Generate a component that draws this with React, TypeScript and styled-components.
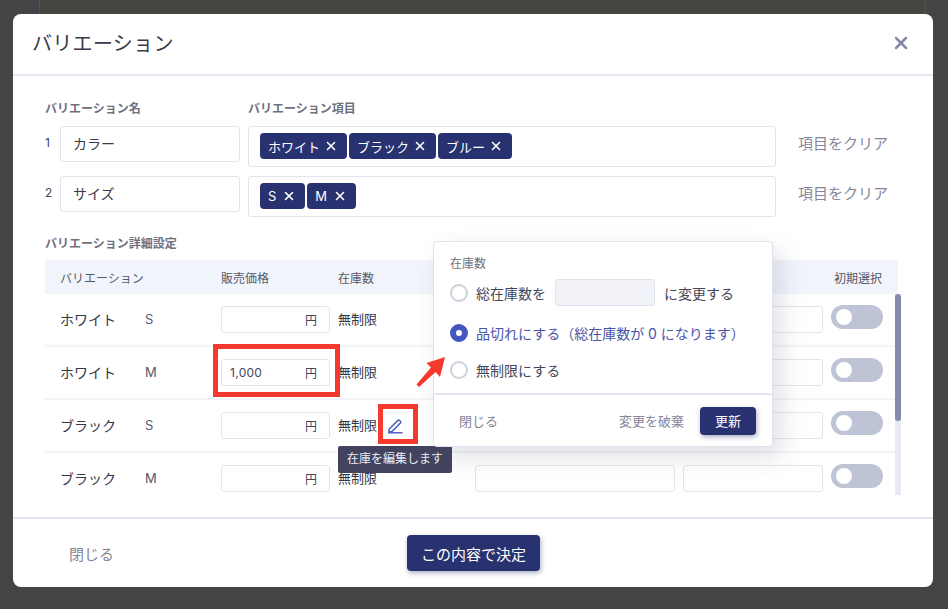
import React from 'react';
import styled, { createGlobalStyle } from 'styled-components';
import { X } from 'lucide-react';

const GlobalStyle = createGlobalStyle`
  html, body {
    margin: 0;
    padding: 0;
    background: #444446;
  }
  * {
    box-sizing: border-box;
  }
`;

const Page = styled.div`
  position: relative;
  width: 948px;
  height: 609px;
  padding: 14px 15px 22px 13px;
  overflow: hidden;
  background: #444446;
  font-family: Inter, 'Noto Sans CJK JP', sans-serif;
  font-size: 14px;
  color: #33354a;
`;

const BackCard = styled.div`
  position: absolute;
  top: 0;
  left: 39px;
  width: 887px;
  height: 14px;
  background: #47453f;
  border-left: 1px solid #5c5134;
  border-right: 1px solid #5c5134;
`;

const Modal = styled.div`
  position: relative;
  display: flex;
  flex-direction: column;
  height: 100%;
  background: #fff;
  border-radius: 8px;
`;

const ModalHeader = styled.header`
  display: flex;
  align-items: center;
  justify-content: space-between;
  height: 62px;
  padding: 0 22px 3px 19px;
  border-bottom: 2px solid #e4e7f0;
`;

const Title = styled.h1`
  margin: 0;
  font-size: 20px;
  font-weight: 400;
  letter-spacing: 0.3px;
  color: #3a3b48;
`;

const CloseIcon = styled(X)`
  color: #8589ac;
`;

const ModalBody = styled.div`
  flex: 1;
  padding: 24px 35px 0 32px;
`;

const NameGrid = styled.div`
  display: grid;
  grid-template-columns: 15px 180px 536px 1fr;
  align-items: start;
`;

const SectionLabel = styled.div`
  font-size: 12px;
  line-height: 18px;
  font-weight: 700;
  color: #6e7080;
`;

const NameHead = styled(SectionLabel)`
  grid-column: 1 / span 2;
  margin-bottom: 8px;
`;

const ItemsHead = styled(SectionLabel)`
  grid-column: 3 / span 2;
  margin-left: 8px;
  margin-bottom: 8px;
`;

const RowNumber = styled.div`
  font-size: 12px;
  line-height: 34px;
  color: #44465a;
`;

const NameField = styled.div`
  height: 36px;
  padding: 0 12px;
  line-height: 33px;
  font-size: 14px;
  color: #3a3b48;
  border: 1px solid #e1e4ee;
  border-radius: 3px;
`;

const TagBox = styled.div`
  display: flex;
  gap: 2px;
  height: 41px;
  margin: 0 0 9px 8px;
  padding: 6px 11px;
  border: 1px solid #e1e4ee;
  border-radius: 3px;
`;

const Tag = styled.span<{ $latin: boolean }>`
  display: inline-flex;
  align-items: center;
  gap: ${(p) => (p.$latin ? 6 : 4)}px;
  height: 26px;
  padding: 0 9px 0 8px;
  font-size: 13px;
  color: #fff;
  background: #283271;
  border-radius: 4px;
`;

const TagClose = styled(X)`
  flex: none;
  color: #fff;
`;

const ClearLink = styled.div`
  margin-left: 22px;
  font-size: 15px;
  line-height: 36px;
  white-space: nowrap;
  color: #85869a;
`;

const DetailLabel = styled(SectionLabel)`
  margin-top: 9px;
  margin-bottom: 7px;
`;

const Table = styled.div`
  position: relative;
  width: 853px;
`;

const TableHead = styled.div`
  display: grid;
  grid-template-columns: 161px 117px 1fr 64px;
  align-items: center;
  height: 34px;
  padding-left: 15px;
  font-size: 12px;
  color: #55576a;
  background: #f1f4fb;
`;

const TableRows = styled.div`
  height: 201px;
  overflow: hidden;
`;

const Row = styled.div`
  display: grid;
  grid-template-columns: 85px 76px 117px 137px 200px 8px 140px 8px 52px;
  align-items: center;
  height: 53px;
  padding-left: 15px;
  padding-bottom: 1px;
  border-bottom: 2px solid #f3f4f8;
`;

const ColorName = styled.div`
  font-size: 14px;
  color: #33354a;
`;

const SizeName = styled.div`
  font-size: 13px;
  color: #55576a;
`;

const PriceField = styled.div`
  display: flex;
  align-items: center;
  justify-content: space-between;
  width: 109px;
  height: 27px;
  padding: 0 12px 0 8px;
  font-size: 12px;
  color: #44465a;
  border: 1px solid #e1e4ee;
  border-radius: 3px;
`;

const Amount = styled.span`
  letter-spacing: 0.3px;
`;

const StockText = styled.div`
  margin-top: -1px;
  font-size: 13px;
  color: #33354a;
`;

const BlankField = styled.div<{ $col: number }>`
  grid-column: ${(p) => p.$col};
  height: 27px;
  border: 1px solid #e1e4ee;
  border-radius: 3px;
`;

const Toggle = styled.div`
  grid-column: 9;
  display: flex;
  align-items: center;
  width: 52px;
  height: 24px;
  margin-top: -5px;
  padding-left: 5px;
  background: #bfc3d6;
  border-radius: 12px;
`;

const ToggleKnob = styled.span`
  width: 16px;
  height: 16px;
  background: #fff;
  border-radius: 50%;
`;

const ScrollTrack = styled.div`
  position: absolute;
  top: 34px;
  right: -3px;
  width: 6px;
  height: 201px;
  background: #e8eaf1;
`;

const ScrollThumb = styled.div`
  height: 127px;
  background: #8589ac;
  border-radius: 3px;
`;

const ModalFooter = styled.footer`
  display: grid;
  grid-template-columns: 338px auto;
  align-items: center;
  height: 70px;
  padding-left: 56px;
  border-top: 2px solid #e4e7f0;
`;

const FooterClose = styled.div`
  font-size: 15px;
  color: #85869a;
`;

const PrimaryButton = styled.button<{ $w: number; $h: number; $size: number }>`
  justify-self: start;
  width: ${(p) => p.$w}px;
  height: ${(p) => p.$h}px;
  padding: 0;
  font-family: inherit;
  font-size: ${(p) => p.$size}px;
  color: #fff;
  background: #283271;
  border: none;
  border-radius: 4px;
  box-shadow: 1px 2px 5px rgba(40, 50, 113, 0.4);
`;

const Popover = styled.div`
  position: absolute;
  top: 241px;
  left: 433px;
  width: 340px;
  height: 206px;
  background: #fff;
  border: 1px solid #dfe2ec;
  border-radius: 4px;
  box-shadow: 8px 10px 24px rgba(60, 66, 100, 0.16);
`;

const PopoverBody = styled.div`
  height: 153px;
  padding: 13px 16px 0;
  border-bottom: 2px solid #e4e7f0;
`;

const PopoverLabel = styled.div`
  margin-bottom: 6px;
  font-size: 12px;
  font-weight: 400;
  line-height: 18px;
  color: #6e7080;
`;

const RadioRow = styled.label<{ $h: number; $active?: boolean }>`
  display: flex;
  align-items: center;
  gap: 8px;
  height: ${(p) => p.$h}px;
  font-size: 14px;
  white-space: nowrap;
  color: ${(p) => (p.$active ? '#4a55a8' : '#44465a')};
`;

const RadioMark = styled.span<{ $on?: boolean }>`
  flex: none;
  width: 18px;
  height: 18px;
  border-radius: 50%;
  background: #fff;
  border: ${(p) => (p.$on ? '6px solid #4255c0' : '2px solid #cdd1dc')};
`;

const StockInput = styled.span`
  width: 100px;
  height: 27px;
  margin: 0 1px;
  background: #f1f3f8;
  border: 1px solid #dfe2ec;
  border-radius: 3px;
`;

const PopoverFooter = styled.div`
  display: flex;
  align-items: center;
  height: 51px;
  padding: 0 16px 0 25px;
`;

const PopoverClose = styled.div`
  flex: 1;
  font-size: 13px;
  color: #85869a;
`;

const Discard = styled.div`
  margin-right: 16px;
  font-size: 13px;
  color: #85869a;
`;

const Highlight = styled.div`
  position: absolute;
  border: 5px solid #f6392e;
`;

const PriceHighlight = styled(Highlight)`
  top: 344px;
  left: 213px;
  width: 127px;
  height: 53px;
`;

const PencilHighlight = styled(Highlight)`
  top: 404px;
  left: 378px;
  width: 40px;
  height: 40px;
`;

const PencilIcon = styled.svg`
  position: absolute;
  top: 417px;
  left: 387px;
`;

const Tooltip = styled.div`
  position: absolute;
  top: 446px;
  left: 338px;
  width: 114px;
  height: 27px;
  font-size: 12px;
  line-height: 26px;
  text-align: center;
  color: #eceef6;
  background: #42445f;
  border-radius: 2px;
`;

const Arrow = styled.svg`
  position: absolute;
  top: 355px;
  left: 414px;
`;

const variations = [
  { color: 'ホワイト', size: 'S', price: '' },
  { color: 'ホワイト', size: 'M', price: '1,000' },
  { color: 'ブラック', size: 'S', price: '' },
  { color: 'ブラック', size: 'M', price: '' },
];

const nameRows = [
  { no: 1, name: 'カラー', tags: ['ホワイト', 'ブラック', 'ブルー'] },
  { no: 2, name: 'サイズ', tags: ['S', 'M'] },
];

export default function App() {
  return (
    <Page>
      <GlobalStyle />
      <BackCard />
      <Modal>
        <ModalHeader>
          <Title>バリエーション</Title>
          <CloseIcon size={20} strokeWidth={3} />
        </ModalHeader>
        <ModalBody>
          <NameGrid>
            <NameHead>バリエーション名</NameHead>
            <ItemsHead>バリエーション項目</ItemsHead>
            {nameRows.map((row) => (
              <React.Fragment key={row.no}>
                <RowNumber>{row.no}</RowNumber>
                <NameField>{row.name}</NameField>
                <TagBox>
                  {row.tags.map((tag) => (
                    <Tag key={tag} $latin={tag.length === 1}>
                      {tag}
                      <TagClose size={14} strokeWidth={2.8} />
                    </Tag>
                  ))}
                </TagBox>
                <ClearLink>項目をクリア</ClearLink>
              </React.Fragment>
            ))}
          </NameGrid>
          <DetailLabel>バリエーション詳細設定</DetailLabel>
          <Table>
            <TableHead>
              <span>バリエーション</span>
              <span>販売価格</span>
              <span>在庫数</span>
              <span>初期選択</span>
            </TableHead>
            <TableRows>
              {variations.map((v) => (
                <Row key={v.color + v.size}>
                  <ColorName>{v.color}</ColorName>
                  <SizeName>{v.size}</SizeName>
                  <PriceField>
                    <Amount>{v.price}</Amount>
                    <span>円</span>
                  </PriceField>
                  <StockText>無制限</StockText>
                  <BlankField $col={5} />
                  <BlankField $col={7} />
                  <Toggle>
                    <ToggleKnob />
                  </Toggle>
                </Row>
              ))}
            </TableRows>
            <ScrollTrack>
              <ScrollThumb />
            </ScrollTrack>
          </Table>
        </ModalBody>
        <ModalFooter>
          <FooterClose>閉じる</FooterClose>
          <PrimaryButton $w={133} $h={36} $size={15}>
            この内容で決定
          </PrimaryButton>
        </ModalFooter>
      </Modal>

      <PriceHighlight />
      <PencilHighlight />
      <PencilIcon width="17" height="17" viewBox="0 0 17 17" fill="none" stroke="#4255c0" strokeWidth="1.4" strokeLinejoin="round">
        <path d="M2 12.2 10.8 3.4a1.2 1.2 0 0 1 1.7 0l.9.9a1.2 1.2 0 0 1 0 1.7L5 14.6H2z" />
        <path d="M1 15.8h14.5" />
      </PencilIcon>
      <Tooltip>在庫を編集します</Tooltip>

      <Popover>
        <PopoverBody>
          <PopoverLabel>在庫数</PopoverLabel>
          <RadioRow $h={27}>
            <RadioMark />
            総在庫数を
            <StockInput />
            に変更する
          </RadioRow>
          <RadioRow $h={53} $active>
            <RadioMark $on />
            品切れにする（総在庫数が 0 になります）
          </RadioRow>
          <RadioRow $h={21}>
            <RadioMark />
            無制限にする
          </RadioRow>
        </PopoverBody>
        <PopoverFooter>
          <PopoverClose>閉じる</PopoverClose>
          <Discard>変更を破棄</Discard>
          <PrimaryButton $w={56} $h={28} $size={13}>
            更新
          </PrimaryButton>
        </PopoverFooter>
      </Popover>

      <Arrow width="34" height="34" viewBox="0 0 34 34">
        <path d="M31 2 26 22 21.5 17 5 32 2.500 29.500 17 12.500 12.500 8z" fill="#f6392e" />
      </Arrow>
    </Page>
  );
}
